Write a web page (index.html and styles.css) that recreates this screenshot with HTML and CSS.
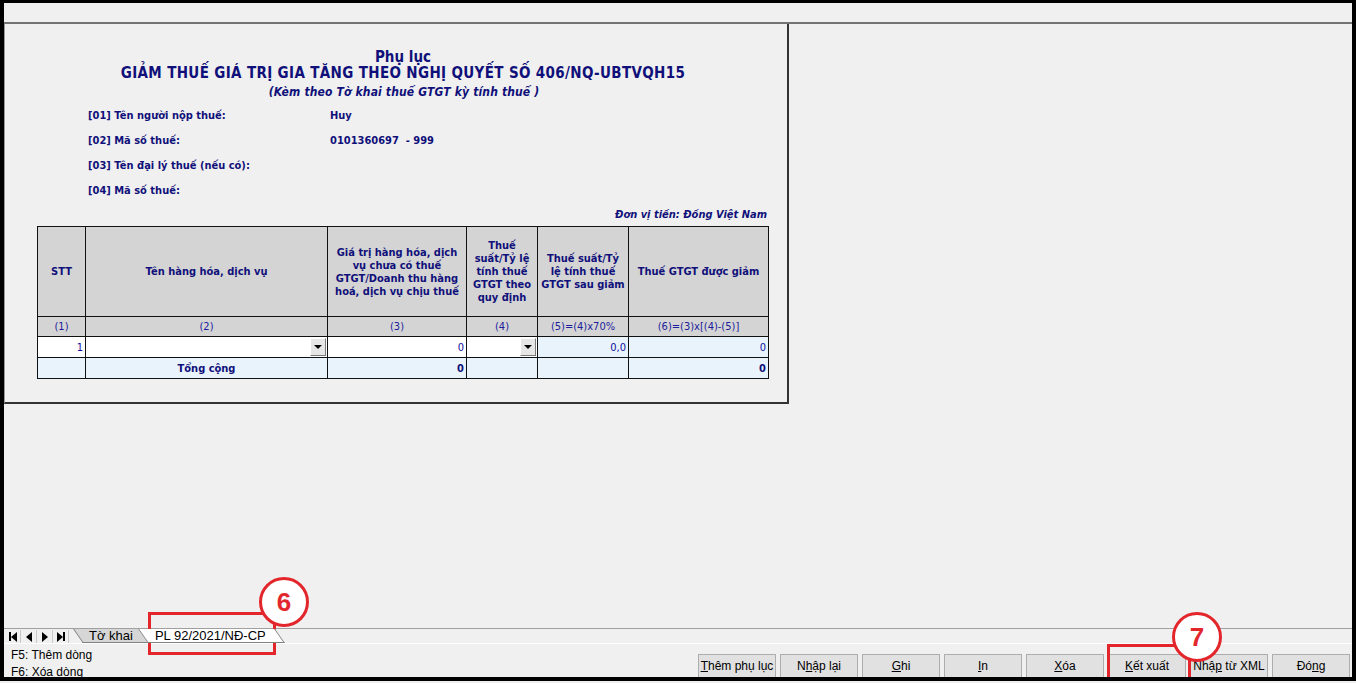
FILE: index.html
```html
<!DOCTYPE html>
<html lang="vi">
<head>
  <meta charset="UTF-8">
  <title>Phụ lục giảm thuế GTGT</title>
  <link rel="stylesheet" href="styles.css">
</head>
<body>

  <div class="window">
    <div class="toolbar"></div>

    <div class="workspace">
      <div class="sheet">
        <div class="heading">
          <div class="h-small">Phụ lục</div>
          <div class="h-main">GIẢM THUẾ GIÁ TRỊ GIA TĂNG THEO NGHỊ QUYẾT SỐ 406/NQ-UBTVQH15</div>
          <div class="h-sub">(Kèm theo Tờ khai thuế GTGT kỳ tính thuế )</div>
        </div>

        <div class="body">
          <div class="field"><span class="label">[01] Tên người nộp thuế:</span><span class="value">Huy</span></div>
          <div class="field"><span class="label">[02] Mã số thuế:</span><span class="value">0101360697&nbsp; - 999</span></div>
          <div class="field"><span class="label">[03] Tên đại lý thuế (nếu có):</span><span class="value"></span></div>
          <div class="field"><span class="label">[04] Mã số thuế:</span><span class="value"></span></div>
          <div class="unit">Đơn vị tiền: Đồng Việt Nam</div>

          <table class="grid">
            <colgroup>
              <col class="c1"><col class="c2"><col class="c3"><col class="c4"><col class="c5"><col class="c6">
            </colgroup>
            <tr class="head">
              <th>STT</th>
              <th>Tên hàng hóa, dịch vụ</th>
              <th>Giá trị hàng hóa, dịch vụ chưa có thuế GTGT/Doanh thu hàng hoá, dịch vụ chịu thuế</th>
              <th>Thuế suất/Tỷ lệ tính thuế GTGT theo quy định</th>
              <th>Thuế suất/Tỷ lệ tính thuế GTGT sau giảm</th>
              <th>Thuế GTGT được giảm</th>
            </tr>
            <tr class="nums">
              <td>(1)</td><td>(2)</td><td>(3)</td><td>(4)</td><td>(5)=(4)x70%</td><td>(6)=(3)x[(4)-(5)]</td>
            </tr>
            <tr class="row">
              <td class="r">1</td>
              <td class="combo"><span class="drop"></span></td>
              <td class="r">0</td>
              <td class="combo"><span class="drop"></span></td>
              <td class="r calc">0,0</td>
              <td class="r calc">0</td>
            </tr>
            <tr class="total">
              <td></td>
              <td class="b">Tổng cộng</td>
              <td class="r b">0</td>
              <td></td>
              <td></td>
              <td class="r b">0</td>
            </tr>
          </table>
        </div>
      </div>
    </div>

    <div class="tabbar">
      <div class="tab-nav">
        <span class="nav"><i class="bar"></i><i class="tri-l"></i></span>
        <span class="nav"><i class="tri-l"></i></span>
        <span class="nav"><i class="tri-r"></i></span>
        <span class="nav"><i class="tri-r"></i><i class="bar"></i></span>
      </div>
      <div class="tab">Tờ khai</div>
      <div class="tab active">PL 92/2021/NĐ-CP</div>
    </div>

    <div class="footer">
      <div class="hints">
        <div>F5: Thêm dòng</div>
        <div>F6: Xóa dòng</div>
      </div>
      <div class="actions">
        <button><u>T</u>hêm phụ lục</button>
        <button>N<u>h</u>ập lại</button>
        <button><u>G</u>hi</button>
        <button><u>I</u>n</button>
        <button><u>X</u>óa</button>
        <button><u>K</u>ết xuất</button>
        <button>Nhậ<u>p</u> từ XML</button>
        <button>Đó<u>n</u>g</button>
      </div>
    </div>

    <div class="mark mark-tab"></div>
    <div class="badge badge-6">6</div>
    <div class="mark mark-btn"></div>
    <div class="badge badge-7">7</div>
  </div>

</body>
</html>
```

FILE: styles.css
```css
* {
  box-sizing: border-box;
}
body {
  margin: 0;
  padding: 0;
  background: #f0f0f0;
  font-family: "DejaVu Sans Condensed", "DejaVu Sans", sans-serif;
}
.window {
  position: relative;
  width: 1356px;
  height: 681px;
  border-style: solid;
  border-color: #000;
  border-width: 3px 4px 4px 4px;
  background: #f0f0f0;
  display: flex;
  flex-direction: column;
  overflow: hidden;
}
.toolbar {
  height: 21px;
  border-bottom: 2px solid #737373;
  flex: none;
}
.workspace {
  flex: 1;
}
.sheet {
  width: 785px;
  height: 380px;
  border-left: 1px solid #9a9a9a;
  border-right: 2px solid #333;
  border-bottom: 2px solid #333;
  padding-top: 25px;
}
.heading {
  text-align: center;
  color: #10107a;
  font-weight: bold;
}
.h-small {
  font-size: 15px;
  line-height: 16px;
  padding-left: 14px;
}
.h-main {
  font-size: 15px;
  line-height: 16px;
  letter-spacing: 0.35px;
  padding-left: 14px;
}
.h-sub {
  font-size: 12px;
  font-style: italic;
  line-height: 22px;
  letter-spacing: 0.15px;
  padding-left: 16px;
}
.body {
  margin-left: 32px;
  width: 732px;
}
.field {
  height: 25px;
  line-height: 25px;
  padding-left: 51px;
  color: #10107a;
  font-size: 11px;
  font-weight: bold;
  display: flex;
}
.label {
  width: 242px;
}
.unit {
  height: 23px;
  line-height: 23px;
  text-align: right;
  padding-right: 2px;
  color: #10107a;
  font-size: 11px;
  font-weight: bold;
  font-style: italic;
}
.grid {
  border-collapse: collapse;
  table-layout: fixed;
  width: 731px;
  font-size: 11px;
}
.c1 { width: 48px; }
.c2 { width: 242px; }
.c3 { width: 139px; }
.c4 { width: 71px; }
.c5 { width: 91px; }
.c6 { width: 140px; }
.grid th,
.grid td {
  border: 1px solid #111;
  padding: 0 2px;
}
.head th {
  height: 90px;
  background: #d4d4d4;
  color: #10107a;
  font-weight: bold;
  line-height: 13px;
  padding: 0 3px;
}
.nums td {
  height: 20px;
  background: #d4d4d4;
  color: #1c1c9c;
  text-align: center;
}
.row td {
  height: 21px;
  background: #fff;
  color: #1010a0;
}
.row td.calc {
  background: #e8f3fc;
}
.total td {
  height: 21px;
  background: #e8f3fc;
  color: #10107a;
  text-align: center;
}
.grid .r {
  text-align: right;
}
.grid .b {
  font-weight: bold;
}
.grid td.combo {
  padding: 0 1px 0 0;
  text-align: right;
  vertical-align: middle;
}
.drop {
  display: inline-block;
  vertical-align: middle;
  width: 16px;
  height: 18px;
  background: #e6e6e6;
  border-top: 1px solid #fff;
  border-left: 1px solid #fff;
  border-right: 1px solid #7a7a7a;
  border-bottom: 1px solid #7a7a7a;
  position: relative;
}
.drop::after {
  content: '';
  position: absolute;
  left: 3px;
  top: 6px;
  border-left: 4px solid transparent;
  border-right: 4px solid transparent;
  border-top: 4px solid #000;
}
.tabbar {
  flex: none;
  height: 16px;
  border-top: 1px solid #a0a0a0;
  border-bottom: 1px solid #fff;
  display: flex;
  align-items: stretch;
  font-family: "Liberation Sans", Arial, sans-serif;
  font-size: 13px;
}
.tab-nav {
  display: flex;
  padding: 1px 0 0 1px;
  width: 70px;
}
.nav {
  width: 16px;
  height: 13px;
  border-right: 1px solid #c8c8c8;
  display: flex;
  align-items: center;
  justify-content: center;
}
.bar {
  width: 2px;
  height: 9px;
  background: #000;
}
.tri-l {
  border-top: 5px solid transparent;
  border-bottom: 5px solid transparent;
  border-right: 6px solid #000;
}
.tri-r {
  border-top: 5px solid transparent;
  border-bottom: 5px solid transparent;
  border-left: 6px solid #000;
}
.tab {
  position: relative;
  line-height: 14px;
  padding: 0 12px 0 11px;
  margin-left: 4px;
  z-index: 1;
}
.tab::before {
  content: '';
  position: absolute;
  top: 0;
  bottom: 0;
  left: 0;
  right: 0;
  background: #d6d6d6;
  border-left: 1px solid #808080;
  border-right: 1px solid #808080;
  border-bottom: 1px solid #808080;
  transform: skewX(35deg);
  z-index: -1;
}
.tab.active {
  margin-left: -2px;
  padding-left: 12px;
  padding-right: 14px;
  z-index: 2;
}
.tab.active::before {
  background: #fff;
}
.footer {
  flex: none;
  height: 33px;
  display: flex;
  justify-content: space-between;
  font-family: "Liberation Sans", Arial, sans-serif;
}
.hints {
  padding: 3px 0 0 7px;
  font-size: 12px;
  line-height: 17px;
  color: #000;
}
.actions {
  display: flex;
  gap: 4px;
  padding: 10px 2px 0 0;
}
.actions button {
  width: 78px;
  height: 24px;
  background: #e1e1e1;
  border: 1px solid #adadad;
  font-family: "Liberation Sans", Arial, sans-serif;
  font-size: 12px;
  color: #000;
  padding: 0;
}
.mark {
  position: absolute;
  border: 3px solid #e3262c;
}
.mark-tab {
  left: 144px;
  top: 609px;
  width: 128px;
  height: 43px;
}
.mark-btn {
  left: 1103px;
  top: 641px;
  width: 84px;
  height: 40px;
}
.badge {
  position: absolute;
  width: 50px;
  height: 50px;
  border-radius: 50%;
  border: 3px solid #e3262c;
  background: #fff;
  color: #e3262c;
  font-family: "Liberation Sans", Arial, sans-serif;
  font-weight: bold;
  font-size: 26px;
  display: flex;
  align-items: center;
  justify-content: center;
}
.badge-6 {
  left: 255px;
  top: 574px;
}
.badge-7 {
  left: 1168px;
  top: 609px;
}
```
